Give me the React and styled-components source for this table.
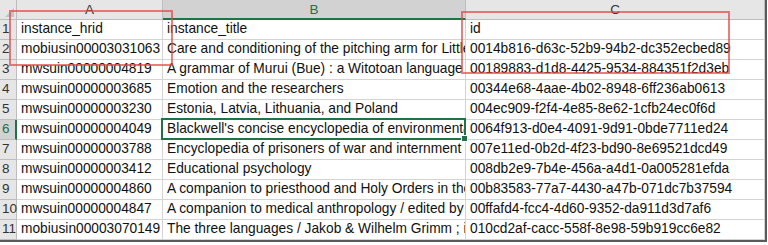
import React from "react";
import styled, { createGlobalStyle, css } from "styled-components";

const Global = createGlobalStyle`
  html, body { margin: 0; padding: 0; background: #ffffff; }
  body { font-family: "Liberation Sans", Arial, sans-serif; }
`;

const COLS = [
  { key: "A", width: 146 },
  { key: "B", width: 303 },
  { key: "C", width: 299 },
];

const ROWS = [
  ["instance_hrid", "instance_title", "id"],
  ["mobiusin00003031063", "Care and conditioning of the pitching arm for Little League", "0014b816-d63c-52b9-94b2-dc352ecbed89"],
  ["mwsuin00000004819", "A grammar of Murui (Bue) : a Witotoan language of Northwest Amazonia", "00189883-d1d8-4425-9534-884351f2d3eb"],
  ["mwsuin00000003685", "Emotion and the researchers", "00344e68-4aae-4b02-8948-6ff236ab0613"],
  ["mwsuin00000003230", "Estonia, Latvia, Lithuania, and Poland", "004ec909-f2f4-4e85-8e62-1cfb24ec0f6d"],
  ["mwsuin00000004049", "Blackwell's concise encyclopedia of environmental issues", "0064f913-d0e4-4091-9d91-0bde7711ed24"],
  ["mwsuin00000003788", "Encyclopedia of prisoners of war and internment", "007e11ed-0b2d-4f23-bd90-8e69521dcd49"],
  ["mwsuin00000003412", "Educational psychology", "008db2e9-7b4e-456a-a4d1-0a005281efda"],
  ["mwsuin00000004860", "A companion to priesthood and Holy Orders in the Middle Ages", "00b83583-77a7-4430-a47b-071dc7b37594"],
  ["mwsuin00000004847", "A companion to medical anthropology / edited by Merrill Singer", "00ffafd4-fcc4-4d60-9352-da911d3d7af6"],
  ["mobiusin00003070149", "The three languages / Jakob & Wilhelm Grimm ; illustrated", "010cd2af-cacc-558f-8e98-59b919cc6e82"],
];

const SEL_ROW = 6;
const SEL_COL = "B";

const Frame = styled.div`
  position: relative;
  width: 768px;
  height: 245px;
  overflow: hidden;
  background: #ffffff;
`;

const Sheet = styled.div`
  display: grid;
  grid-template-columns: 17px ${COLS.map((c) => c.width + "px").join(" ")};
  grid-auto-rows: 20px;
  width: 765px;
  border-left: 1px solid #8a8a8a;
  border-right: 2px solid #5a5a5a;
  border-bottom: 2px solid #5a5a5a;
  box-sizing: content-box;
  margin-left: -1px;
  font-size: 13.75px;
  color: #111111;
`;

const Corner = styled.div`
  position: relative;
  background: #e6e6e6;
  border-right: 1px solid #bdbdbd;
  border-bottom: 1px solid #bdbdbd;
  box-sizing: border-box;
  &::after {
    content: "";
    position: absolute;
    right: 2px;
    bottom: 2px;
    width: 0;
    height: 0;
    border-left: 9px solid transparent;
    border-bottom: 9px solid #c4c4c4;
  }
`;

const ColHead = styled.div`
  display: flex;
  align-items: center;
  justify-content: center;
  box-sizing: border-box;
  background: ${(p) => (p.$active ? "#d2d2d2" : "#e6e6e6")};
  color: ${(p) => (p.$active ? "#217346" : "#333333")};
  border-right: 1px solid #bdbdbd;
  border-bottom: ${(p) => (p.$active ? "2px solid #217346" : "1px solid #bdbdbd")};
  font-size: 13.5px;
  padding-top: ${(p) => (p.$active ? "1px" : "0")};
`;

const RowHead = styled.div`
  display: flex;
  align-items: flex-end;
  box-sizing: border-box;
  padding: 0 0 2px 2px;
  background: ${(p) => (p.$active ? "#d2d2d2" : "#e6e6e6")};
  color: ${(p) => (p.$active ? "#217346" : "#333333")};
  border-right: ${(p) => (p.$active ? "2px solid #217346" : "1px solid #bdbdbd")};
  border-bottom: 1px solid #bdbdbd;
  font-size: 13.5px;
  line-height: 16px;
`;

const Cell = styled.div`
  position: relative;
  display: flex;
  align-items: flex-end;
  box-sizing: border-box;
  padding: 0 0 2px 4px;
  border-right: 1px solid #d4d4d4;
  border-bottom: 1px solid #d4d4d4;
  white-space: nowrap;
  overflow: ${(p) => (p.$selected ? "visible" : "hidden")};
  line-height: 16px;
  ${(p) =>
    p.$selected &&
    css`
      z-index: 2;
    `}
`;

const CellText = styled.span`
  display: block;
  overflow: hidden;
  width: 100%;
`;

const Selection = styled.div`
  position: absolute;
  left: -2px;
  top: -2px;
  right: -1px;
  bottom: -1px;
  border: 2px solid #217346;
  pointer-events: none;
  &::after {
    content: "";
    position: absolute;
    right: -4px;
    bottom: -4px;
    width: 5px;
    height: 5px;
    background: #217346;
    border: 1px solid #ffffff;
  }
`;

const Annotation = styled.div`
  position: absolute;
  left: ${(p) => p.$x}px;
  top: ${(p) => p.$y}px;
  width: ${(p) => p.$w}px;
  height: ${(p) => p.$h}px;
  box-sizing: border-box;
  border: 2px solid rgba(228, 70, 70, 0.7);
  pointer-events: none;
  z-index: 5;
`;

export default function App() {
  return (
    <Frame>
      <Global />
      <Sheet>
        <Corner />
        {COLS.map((c) => (
          <ColHead key={c.key} $active={c.key === SEL_COL}>
            {c.key}
          </ColHead>
        ))}
        {ROWS.map((row, ri) => {
          const n = ri + 1;
          return (
            <React.Fragment key={n}>
              <RowHead $active={n === SEL_ROW}>{n}</RowHead>
              {row.map((val, ci) => {
                const selected = n === SEL_ROW && COLS[ci].key === SEL_COL;
                return (
                  <Cell key={ci} $selected={selected}>
                    <CellText>{val}</CellText>
                    {selected && <Selection />}
                  </Cell>
                );
              })}
            </React.Fragment>
          );
        })}
      </Sheet>
      <Annotation $x={9} $y={10} $w={164} $h={56} />
      <Annotation $x={461} $y={11} $w={269} $h={63} />
    </Frame>
  );
}
